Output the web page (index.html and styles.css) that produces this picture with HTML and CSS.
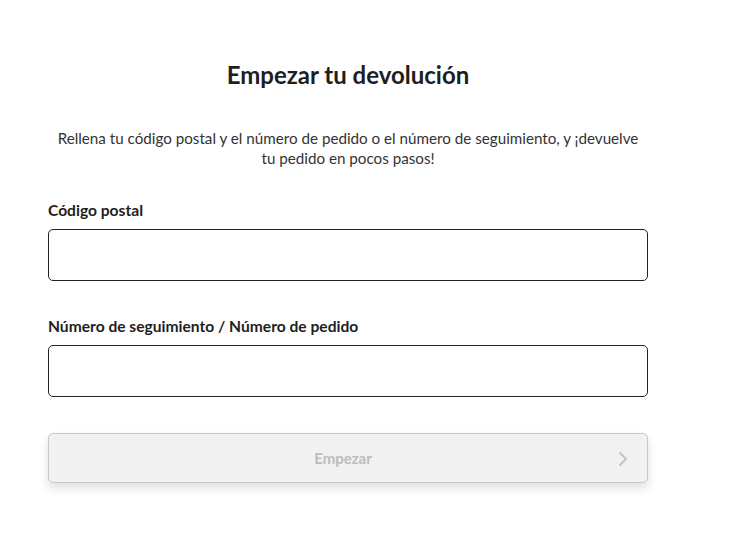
FILE: index.html
```html
<!DOCTYPE html>
<html lang="es">
<head>
<meta charset="utf-8">
<title>Empezar tu devolución</title>
<link rel="stylesheet" href="styles.css">
</head>
<body>
<main class="page">
  <h1 class="title">Empezar tu devolución</h1>
  <p class="intro">Rellena tu código postal y el número de pedido o el número de seguimiento, y ¡devuelve tu pedido en pocos pasos!</p>
  <form class="form">
    <div class="field">
      <label class="label" for="zip">Código postal</label>
      <input class="input" id="zip" type="text">
    </div>
    <div class="field">
      <label class="label" for="track">Número de seguimiento / Número de pedido</label>
      <input class="input" id="track" type="text">
    </div>
    <button class="btn" type="button" disabled>
      <span class="btn-text">Empezar</span>
      <svg class="chev" width="10" height="16" viewBox="0 0 10 16"><path d="M2 2l6 6-6 6" fill="none" stroke="#c4c4c4" stroke-width="2" stroke-linecap="round" stroke-linejoin="round"/></svg>
    </button>
  </form>
</main>
</body>
</html>
```
FILE: styles.css
```css
* { box-sizing: border-box; }
html, body { margin: 0; padding: 0; background: #fff; }
body {
  font-family: "Lato", "Liberation Sans", sans-serif;
  color: #222;
}
.page {
  width: 600px;
  margin-left: 48px;
  padding-top: 60px;
  padding-bottom: 40px;
}
.title {
  margin: 0;
  text-align: center;
  font-size: 24px;
  line-height: 30px;
  font-weight: 700;
  color: #1e1e1e;
}
.intro {
  margin: 38px 4px 0;
  text-align: center;
  font-size: 15.2px;
  line-height: 20px;
  color: #333;
}
.form {
  margin-top: 32px;
  display: flex;
  flex-direction: column;
  gap: 35px;
}
.label {
  display: block;
  font-size: 15.6px;
  font-weight: 700;
  line-height: 20px;
  color: #1e1e1e;
  margin-bottom: 9px;
}
.input {
  display: block;
  width: 100%;
  height: 52px;
  border: 1px solid #222;
  border-radius: 5px;
  background: #fff;
  font: inherit;
}
.btn {
  position: relative;
  display: flex;
  align-items: center;
  justify-content: center;
  width: 100%;
  height: 50px;
  margin-top: 1px;
  border: 1px solid #c8c8c8;
  border-radius: 5px;
  background: #f1f1f1;
  box-shadow: 0 5px 10px rgba(0,0,0,0.13);
  font-family: inherit;
  font-size: 15px;
  font-weight: 700;
  color: #bdbdbd;
  padding: 0;
}
.btn-text { margin-left: -10px; }
.chev {
  position: absolute;
  right: 19px;
  top: 17px;
}
```
